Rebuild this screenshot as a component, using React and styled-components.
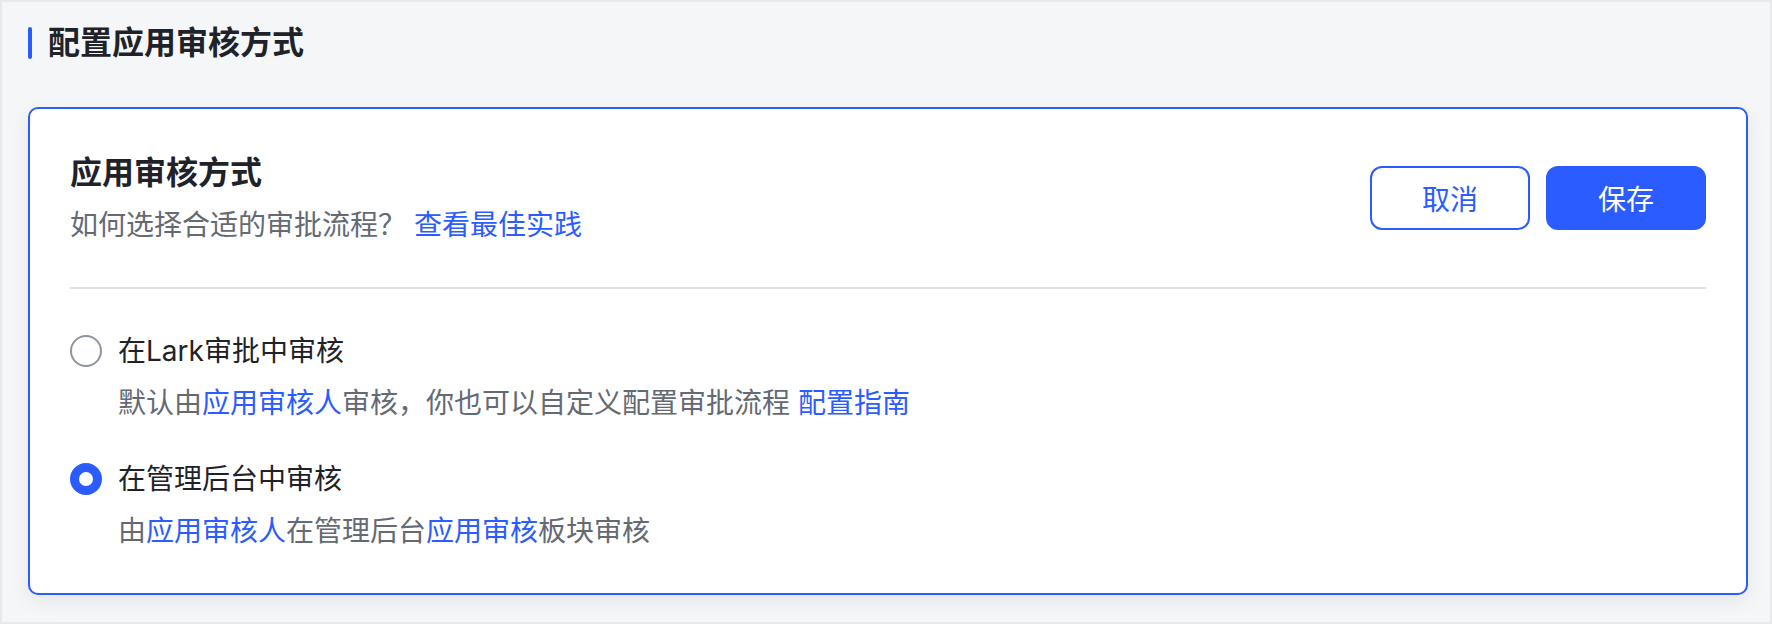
import React, { useState } from "react";
import styled, { createGlobalStyle } from "styled-components";

const GlobalStyle = createGlobalStyle`
  html, body {
    margin: 0;
    padding: 0;
    background: #ffffff;
  }
  body {
    font-family: "Inter", "Noto Sans CJK SC", "Noto Sans", sans-serif;
    -webkit-font-smoothing: antialiased;
  }
`;

const BLUE = "#2b5cff";

const Frame = styled.div`
  box-sizing: border-box;
  width: 1772px;
  height: 624px;
  padding: 17px 0 0 26px;
  background: #f5f6f7;
  border: 2px solid #e8e9eb;
`;

const PageTitle = styled.h1`
  display: flex;
  align-items: center;
  gap: 16px;
  margin: 0 0 40px;
  height: 48px;
  font-size: 32px;
  line-height: 48px;
  font-weight: 600;
  color: #1f2329;

  &::before {
    content: "";
    display: block;
    width: 4px;
    height: 32px;
    border-radius: 2px;
    background: ${BLUE};
  }
`;

const Card = styled.section`
  box-sizing: border-box;
  width: 1720px;
  padding: 40px;
  background: #ffffff;
  border: 2px solid ${BLUE};
  border-radius: 10px;
  box-shadow: 0 6px 20px rgba(31, 35, 41, 0.07);
`;

const Header = styled.div`
  display: flex;
  align-items: center;
  justify-content: space-between;
  padding-bottom: 40px;
  border-bottom: 2px solid #dee0e3;
`;

const CardTitle = styled.h2`
  margin: 0;
  font-size: 32px;
  line-height: 48px;
  font-weight: 600;
  color: #1f2329;
`;

const Hint = styled.p`
  margin: 6px 0 0;
  font-size: 28px;
  line-height: 44px;
  color: #646a73;
`;

const Link = styled.a`
  color: ${BLUE};
  text-decoration: none;
  cursor: pointer;
`;

const Actions = styled.div`
  display: flex;
  gap: 16px;
`;

const Button = styled.button`
  box-sizing: border-box;
  width: 160px;
  height: 64px;
  border-radius: 12px;
  border: 2px solid ${BLUE};
  font-family: inherit;
  font-size: 28px;
  cursor: pointer;
  background: ${(p) => (p.$primary ? BLUE : "#ffffff")};
  color: ${(p) => (p.$primary ? "#ffffff" : BLUE)};
`;

const Options = styled.div`
  display: flex;
  flex-direction: column;
  gap: 32px;
  padding-top: 40px;
`;

const Option = styled.div`
  display: flex;
  flex-direction: column;
  gap: 8px;
`;

const OptionRow = styled.label`
  display: flex;
  align-items: center;
  gap: 16px;
  font-size: 28px;
  line-height: 44px;
  color: #1f2329;
  cursor: pointer;
`;

const Radio = styled.span`
  box-sizing: border-box;
  flex: none;
  width: 32px;
  height: 32px;
  border-radius: 50%;
  border: ${(p) => (p.$checked ? `9px solid ${BLUE}` : "2px solid #8f959e")};
  background: #ffffff;
`;

const Desc = styled.div`
  padding-left: 48px;
  font-size: 28px;
  line-height: 44px;
  color: #646a73;
`;

export default function App() {
  const [mode, setMode] = useState("admin");

  return (
    <>
      <GlobalStyle />
      <Frame>
        <PageTitle>配置应用审核方式</PageTitle>
        <Card>
          <Header>
            <div>
              <CardTitle>应用审核方式</CardTitle>
              <Hint>
                如何选择合适的审批流程？ <Link>查看最佳实践</Link>
              </Hint>
            </div>
            <Actions>
              <Button>取消</Button>
              <Button $primary>保存</Button>
            </Actions>
          </Header>
          <Options>
            <Option>
              <OptionRow onClick={() => setMode("lark")}>
                <Radio $checked={mode === "lark"} />
                在Lark审批中审核
              </OptionRow>
              <Desc>
                默认由<Link>应用审核人</Link>审核，你也可以自定义配置审批流程{" "}
                <Link>配置指南</Link>
              </Desc>
            </Option>
            <Option>
              <OptionRow onClick={() => setMode("admin")}>
                <Radio $checked={mode === "admin"} />
                在管理后台中审核
              </OptionRow>
              <Desc>
                由<Link>应用审核人</Link>在管理后台<Link>应用审核</Link>板块审核
              </Desc>
            </Option>
          </Options>
        </Card>
      </Frame>
    </>
  );
}
